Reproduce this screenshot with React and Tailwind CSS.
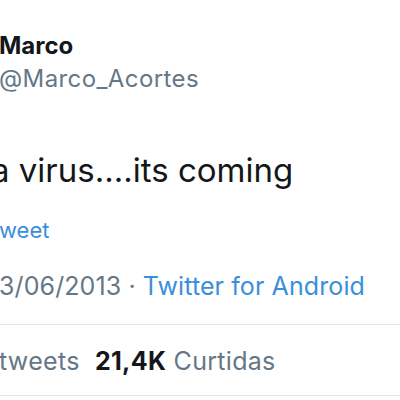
import React from "react";

export default function App() {
    return (
        <div className="w-[400px] h-[400px] overflow-hidden bg-white font-['Inter',sans-serif] whitespace-nowrap">
            <div className="pt-[31px]">
                <div className="h-[30px] leading-[30px] text-[24px] font-bold text-[#14171a] ml-[-1px]">Marco</div>
                <div className="mt-[4px] h-[28px] leading-[28px] text-[24px] tracking-[0.4px] text-[#657786] ml-[-1px]">@Marco_Acortes</div>
                <div className="mt-[57px] h-[40px] leading-[40px] text-[33px] text-[#14171a] ml-[-9px]">a virus....its coming</div>
                <div className="mt-[26px] h-[28px] leading-[28px] text-[22px] text-[#3a8fd8] ml-[-1px]">weet</div>
                <div className="mt-[27px] h-[30px] leading-[30px] text-[25px] tracking-[0.1px] text-[#657786] ml-[-1px]">
                    3/06/2013 · <span className="text-[#3a8fd8]">Twitter for Android</span>
                </div>
                <div className="mt-[23px] border-t border-[#e3e6e9]" />
                <div className="mt-[22px] h-[28px] leading-[28px] text-[25px] tracking-[0.3px] text-[#657786] ml-[-1px]">
                    tweets <span className="ml-[8px] font-bold text-[#14171a]">21,4K</span> Curtidas
                </div>
                <div className="mt-[20px] border-t border-[#e3e6e9]" />
            </div>
        </div>
    );
}
